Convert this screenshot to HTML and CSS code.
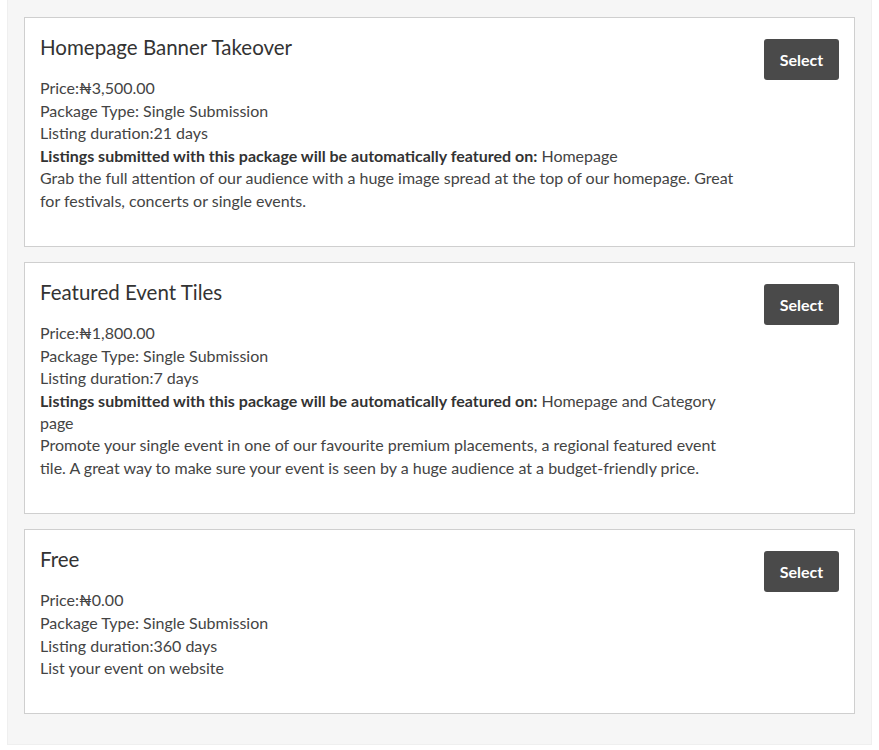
FILE: index.html
```html
<!DOCTYPE html>
<html lang="en">
<head>
    <meta charset="UTF-8">
    <meta name="viewport" content="width=device-width, initial-scale=1.0">
    <title>Packages</title>
    <link rel="stylesheet" href="styles.css">
</head>
<body>
    <div class="package-list">
        <div class="package">
            <div class="package-info">
                <h3 class="package-title">Homepage Banner Takeover</h3>
                <p class="package-price">Price:₦3,500.00</p>
                <p>Package Type: Single Submission</p>
                <p>Listing duration:21 days</p>
                <p><strong>Listings submitted with this package will be automatically featured on:</strong> Homepage</p>
                <p>Grab the full attention of our audience with a huge image spread at the top of our homepage. Great for festivals, concerts or single events.</p>
            </div>
            <button class="select-btn">Select</button>
        </div>
        <div class="package">
            <div class="package-info">
                <h3 class="package-title">Featured Event Tiles</h3>
                <p class="package-price">Price:₦1,800.00</p>
                <p>Package Type: Single Submission</p>
                <p>Listing duration:7 days</p>
                <p><strong>Listings submitted with this package will be automatically featured on:</strong> Homepage and Category page</p>
                <p>Promote your single event in one of our favourite premium placements, a regional featured event tile. A great way to make sure your event is seen by a huge audience at a budget-friendly price.</p>
            </div>
            <button class="select-btn">Select</button>
        </div>
        <div class="package">
            <div class="package-info">
                <h3 class="package-title">Free</h3>
                <p class="package-price">Price:₦0.00</p>
                <p>Package Type: Single Submission</p>
                <p>Listing duration:360 days</p>
                <p>List your event on website</p>
            </div>
            <button class="select-btn">Select</button>
        </div>
    </div>
</body>
</html>
```

FILE: styles.css
```css
body{
    margin: 0;
    background: #fff;
    font-family: Lato, "Open Sans", sans-serif;
    font-size: 16px;
    line-height: 22.4px;
    color: #444;
}
.package-list{
    margin: 0 7px;
    padding: 17px 16px 30px;
    background: #f6f6f6;
    border: 1px solid #efefef;
    border-top: none;
    display: flex;
    flex-direction: column;
    gap: 15px;
}
.package{
    display: flex;
    justify-content: space-between;
    align-items: flex-start;
    background: #fff;
    border: 1px solid #cfcfcf;
    padding: 19px 15px 34px;
}
.package-info{
    width: 700px;
}
.package-title{
    margin: 0 0 20px;
    font-size: 20.5px;
    line-height: 20px;
    font-weight: normal;
    color: #333;
}
.package-info p{
    margin: 0;
}
.package-info .package-price{
    margin-bottom: 0.5px;
}
.package-info strong{
    color: #333;
}
.select-btn{
    margin-top: 2px;
    width: 75px;
    height: 41px;
    background: #4a4a4a;
    color: #fff;
    border: none;
    border-radius: 3px;
    font-family: Lato, sans-serif;
    font-size: 16px;
    font-weight: bold;
}
```
